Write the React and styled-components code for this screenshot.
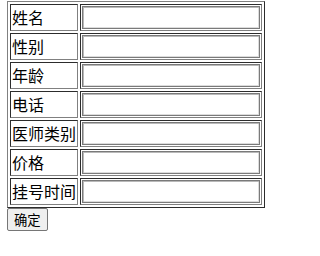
import React from 'react';
import styled, { createGlobalStyle } from 'styled-components';

const GlobalStyle = createGlobalStyle`
  body {
    margin: 1px 7px;
    background: #fff;
    font-family: "Noto Sans CJK SC", "Liberation Sans", sans-serif;
    font-size: 16px;
    color: #000;
  }
`;

const FormTable = styled.table`
  border: 1px outset #808080;
  border-spacing: 2px;
  border-collapse: separate;
`;

const Cell = styled.td`
  border: 1px inset #808080;
  padding: 1px;
  height: 23px;
  vertical-align: middle;
  white-space: nowrap;
`;

const Label = styled(Cell)`
  font-size: 16px;
  line-height: 23px;
  width: 64px;
`;

// two thin grey lines, like the old inset text box
const Field = styled.input`
  box-sizing: border-box;
  display: block;
  width: 178px;
  height: 23px;
  border: 1px solid #7a7a7a;
  box-shadow: inset 1px 1px 0 #b8b8b8, inset -1px -1px 0 #dcdcdc;
  padding: 1px 3px;
  font-family: inherit;
  font-size: 13px;
  background: #fff;
  outline: none;
`;

const Submit = styled.button`
  display: block;
  box-sizing: border-box;
  height: 23px;
  padding: 0 6px;
  margin: 0;
  border: 1px solid #767676;
  border-radius: 2px;
  background: #efefef;
  color: #000;
  font-family: "Noto Sans CJK SC", "Liberation Sans", sans-serif;
  font-size: 13.33px;
  line-height: 21px;
`;

const fields = ['姓名', '性别', '年龄', '电话', '医师类别', '价格', '挂号时间'];

export default function App() {
  return (
    <>
      <GlobalStyle />
      <form onSubmit={e => e.preventDefault()}>
        <FormTable>
          <tbody>
            {fields.map(name => (
              <tr key={name}>
                <Label>{name}</Label>
                <Cell>
                  <Field type="text" name={name} />
                </Cell>
              </tr>
            ))}
          </tbody>
        </FormTable>
        <Submit type="submit">确定</Submit>
      </form>
    </>
  );
}
